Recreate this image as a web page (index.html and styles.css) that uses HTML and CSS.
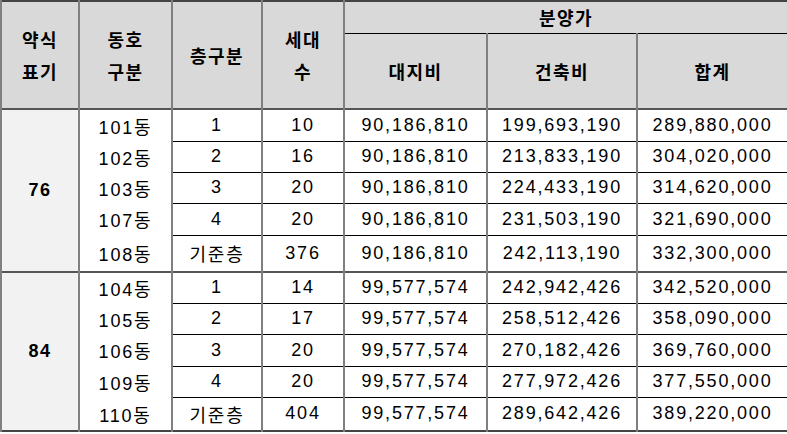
FILE: index.html
```html
<!DOCTYPE html>
<html lang="ko">
<head>
<meta charset="utf-8">
<title>분양가</title>
<link rel="stylesheet" href="styles.css">
</head>
<body>
<table class="price">
  <colgroup>
    <col class="c1"><col class="c2"><col class="c3"><col class="c4"><col class="c5"><col class="c6"><col class="c7">
  </colgroup>
  <thead>
    <tr class="h1">
      <th rowspan="2">약식<br>표기</th>
      <th rowspan="2">동호<br>구분</th>
      <th rowspan="2">층구분</th>
      <th rowspan="2">세대<br>수</th>
      <th colspan="3" class="group">분양가</th>
    </tr>
    <tr class="h2">
      <th>대지비</th>
      <th>건축비</th>
      <th>합계</th>
    </tr>
  </thead>
  <tbody>
    <tr class="r32"><td rowspan="5" class="type">76</td><td class="dong">101동</td><td>1</td><td>10</td><td>90,186,810</td><td>199,693,190</td><td>289,880,000</td></tr>
    <tr class="r31"><td class="dong">102동</td><td>2</td><td>16</td><td>90,186,810</td><td>213,833,190</td><td>304,020,000</td></tr>
    <tr class="r31"><td class="dong">103동</td><td>3</td><td>20</td><td>90,186,810</td><td>224,433,190</td><td>314,620,000</td></tr>
    <tr class="r32"><td class="dong">107동</td><td>4</td><td>20</td><td>90,186,810</td><td>231,503,190</td><td>321,690,000</td></tr>
    <tr class="r37"><td class="dong">108동</td><td>기준층</td><td>376</td><td>90,186,810</td><td>242,113,190</td><td>332,300,000</td></tr>
  </tbody>
  <tbody>
    <tr class="r31"><td rowspan="5" class="type">84</td><td class="dong">104동</td><td>1</td><td>14</td><td>99,577,574</td><td>242,942,426</td><td>342,520,000</td></tr>
    <tr class="r31"><td class="dong">105동</td><td>2</td><td>17</td><td>99,577,574</td><td>258,512,426</td><td>358,090,000</td></tr>
    <tr class="r32"><td class="dong">106동</td><td>3</td><td>20</td><td>99,577,574</td><td>270,182,426</td><td>369,760,000</td></tr>
    <tr class="r31"><td class="dong">109동</td><td>4</td><td>20</td><td>99,577,574</td><td>277,972,426</td><td>377,550,000</td></tr>
    <tr class="r34"><td class="dong">110동</td><td>기준층</td><td>404</td><td>99,577,574</td><td>289,642,426</td><td>389,220,000</td></tr>
  </tbody>
</table>
</body>
</html>
```
FILE: styles.css
```css
html, body {
  margin: 0;
  padding: 0;
  background: #ffffff;
}

.price {
  width: 787px;
  table-layout: fixed;
  border-collapse: collapse;
  border: 2px solid #444;
  font-family: "Liberation Sans", "Noto Sans CJK KR", sans-serif;
  font-size: 18px;
  color: #000;
}

.c1 { width: 78px; }
.c2 { width: 93px; }
.c3 { width: 90px; }
.c4 { width: 82px; }
.c5 { width: 143px; }
.c6 { width: 150px; }
.c7 { width: 151px; }

.price th,
.price td {
  padding: 0;
  text-align: center;
  vertical-align: middle;
  border-left: 2px solid #808080;
  border-right: 2px solid #808080;
  border-top: 1px solid #000;
  border-bottom: 1px solid #000;
  letter-spacing: 1.8px;
  white-space: nowrap;
  overflow: hidden;
}

.price th {
  background: #d9d9d9;
  font-weight: bold;
  line-height: 32px;
  letter-spacing: 1.5px;
  font-family: "Noto Sans CJK KR", "Liberation Sans", sans-serif;
}

.price thead {
  border-bottom: 2px solid #555;
}

.h1 { height: 32px; }
.h2 { height: 76px; }

.h1 .group {
  line-height: 28px;
}

.price tbody {
  border-top: 2px solid #555;
}

.price td.dong {
  border-top: none;
  border-bottom: none;
}

.price td.type {
  background: #f2f2f2;
  font-weight: bold;
  letter-spacing: 1.5px;
}

.r31 { height: 31px; }
.r32 { height: 32px; }
.r34 { height: 34px; }
.r37 { height: 37px; }
```
